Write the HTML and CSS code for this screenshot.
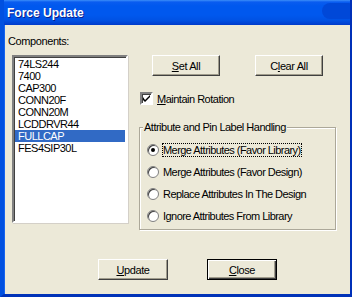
FILE: index.html
```html
<!DOCTYPE html>
<html lang="en">
<head>
    <meta charset="UTF-8">
    <title>Force Update</title>
    <link rel="stylesheet" href="styles.css">
</head>
<body>
    <div class="window">
        <div class="titlebar">Force Update</div>

        <div class="client">
            <div class="main">
                <!-- component list -->
                <div class="left">
                    <div class="label">Components:</div>
                    <div class="listbox">
                        <div class="item">74LS244</div>
                        <div class="item">7400</div>
                        <div class="item">CAP300</div>
                        <div class="item">CONN20F</div>
                        <div class="item">CONN20M</div>
                        <div class="item">LCDDRVR44</div>
                        <div class="item selected">FULLCAP</div>
                        <div class="item">FES4SIP30L</div>
                    </div>
                </div>

                <div class="right">
                    <div class="top-buttons">
                        <button class="btn"><u>S</u>et All</button>
                        <button class="btn">C<u>l</u>ear All</button>
                    </div>

                    <label class="check-row">
                        <span class="checkbox">
                            <svg width="7" height="7" viewBox="0 0 7 7"><path d="M0 2 L0 5 L2 7 L7 2 L7 0 L2 5 Z" fill="#000"/></svg>
                        </span>
                        <span><u>M</u>aintain Rotation</span>
                    </label>

                    <!-- attribute handling options -->
                    <div class="group">
                        <div class="legend">Attribute and Pin Label Handling</div>
                        <div class="radio-row"><span class="radio checked"></span><span class="focus">Merge Attributes (Favor Library)</span></div>
                        <div class="radio-row"><span class="radio"></span><span>Merge Attributes (Favor Design)</span></div>
                        <div class="radio-row"><span class="radio"></span><span>Replace Attributes In The Design</span></div>
                        <div class="radio-row"><span class="radio"></span><span>Ignore Attributes From Library</span></div>
                    </div>
                </div>
            </div>

            <div class="footer">
                <button class="btn wide"><u>U</u>pdate</button>
                <button class="btn wide default"><u>C</u>lose</button>
            </div>
        </div>
    </div>
</body>
</html>
```

FILE: styles.css
```css
body {
    margin: 0;
    font-family: "Liberation Sans", Arial, sans-serif;
    font-size: 11px;
    color: #000;
    background: #ece9d8;
}

.window {
    box-sizing: border-box;
    width: 352px;
    height: 297px;
    border-left: 4px solid #0050e0;
    border-right: 2px solid #0030b8;
    border-bottom: 3px solid #0032b8;
    box-shadow: inset 1px 0 #1664f0;
    background: #ece9d8;
    overflow: hidden;
}

.titlebar {
    height: 25px;
    line-height: 26px;
    margin-left: -4px;
    padding-left: 7px;
    color: #fff;
    font-weight: bold;
    font-size: 12px;
    text-shadow: 1px 1px #0a1e8c;
    background: linear-gradient(to bottom, #3c8ef8 0px, #0a5cf0 2px, #0058ee 6px, #0058ee 15px, #0052e4 20px, #0040d0 24px, #0038c8 25px);
    position: relative;
    overflow: hidden;
}

.titlebar::after {
    content: "";
    position: absolute;
    right: -6px;
    top: 3px;
    width: 34px;
    height: 16px;
    border-radius: 8px;
    background: #0048d8;
}

.client {
    height: 269px;
    display: flex;
    flex-direction: column;
}

.main {
    display: flex;
    padding: 10px 0 0 4px;
}

.label {
    height: 13px;
    line-height: 13px;
    letter-spacing: -0.4px;
}

.listbox {
    margin: 7px 0 0 4px;
    width: 112px;
    height: 164px;
    background: #fff;
    border-top: 2px solid #808080;
    border-left: 2px solid #808080;
    border-right: 2px solid #fff;
    border-bottom: 2px solid #fff;
    box-shadow: inset 1px 1px #404040, 1px 1px #d4d0c8;
    overflow: hidden;
}

.item {
    height: 12px;
    line-height: 12px;
    padding-left: 3px;
    margin: 0 1px;
    letter-spacing: -0.5px;
    white-space: nowrap;
}

.item:first-child {
    margin-top: 1px;
}

.item.selected {
    background: #316ac5;
    color: #fff;
}

.right {
    margin-left: 11px;
    width: 197px;
}

.top-buttons {
    display: flex;
    gap: 35px;
    margin: 20px 0 0 13px;
}

.btn {
    width: 68px;
    height: 21px;
    padding: 0;
    font-family: inherit;
    font-size: 11px;
    letter-spacing: -0.4px;
    background: #ece9d8;
    color: #000;
    border-top: 1px solid #fff;
    border-left: 1px solid #fff;
    border-right: 1px solid #404040;
    border-bottom: 1px solid #404040;
    box-shadow: inset -1px -1px #a09c8c;
}

.btn.default {
    border: 1px solid #000;
    box-shadow: inset 1px 1px #fff, inset -1px -1px #404040, inset -2px -2px #a09c8c;
}

.check-row {
    display: flex;
    align-items: center;
    gap: 4px;
    margin: 16px 0 0 1px;
    height: 13px;
    letter-spacing: -0.5px;
}

.checkbox {
    width: 9px;
    height: 9px;
    background: #fff;
    border-top: 2px solid #808080;
    border-left: 2px solid #808080;
    border-right: 2px solid #fff;
    border-bottom: 2px solid #fff;
    box-shadow: inset 1px 1px #404040;
    display: flex;
    align-items: center;
    justify-content: center;
}

.group {
    position: relative;
    box-sizing: border-box;
    margin-top: 22px;
    height: 103px;
    border: 1px solid #aca899;
    box-shadow: inset 1px 1px #fff, 1px 1px #fff;
    padding-top: 15px;
}

.legend {
    position: absolute;
    top: -7px;
    left: 3px;
    padding: 0 1px;
    background: #ece9d8;
    line-height: 12px;
    letter-spacing: -0.5px;
}

.radio-row {
    display: flex;
    align-items: center;
    gap: 4px;
    height: 13px;
    margin: 0 0 9px 7px;
    letter-spacing: -0.55px;
    white-space: nowrap;
}

.radio {
    width: 12px;
    height: 12px;
    border-radius: 50%;
    box-sizing: border-box;
    border: 1px solid #808080;
    background: #fff;
    box-shadow: inset 1px 1px #404040;
    position: relative;
}

.radio.checked::after {
    content: "";
    position: absolute;
    left: 3px;
    top: 3px;
    width: 4px;
    height: 4px;
    border-radius: 50%;
    background: #000;
}

.focus {
    outline: 1px dotted #000;
}

.footer {
    display: flex;
    gap: 39px;
    margin: 29px 0 0 94px;
}

.btn.wide {
    width: 70px;
}
```
